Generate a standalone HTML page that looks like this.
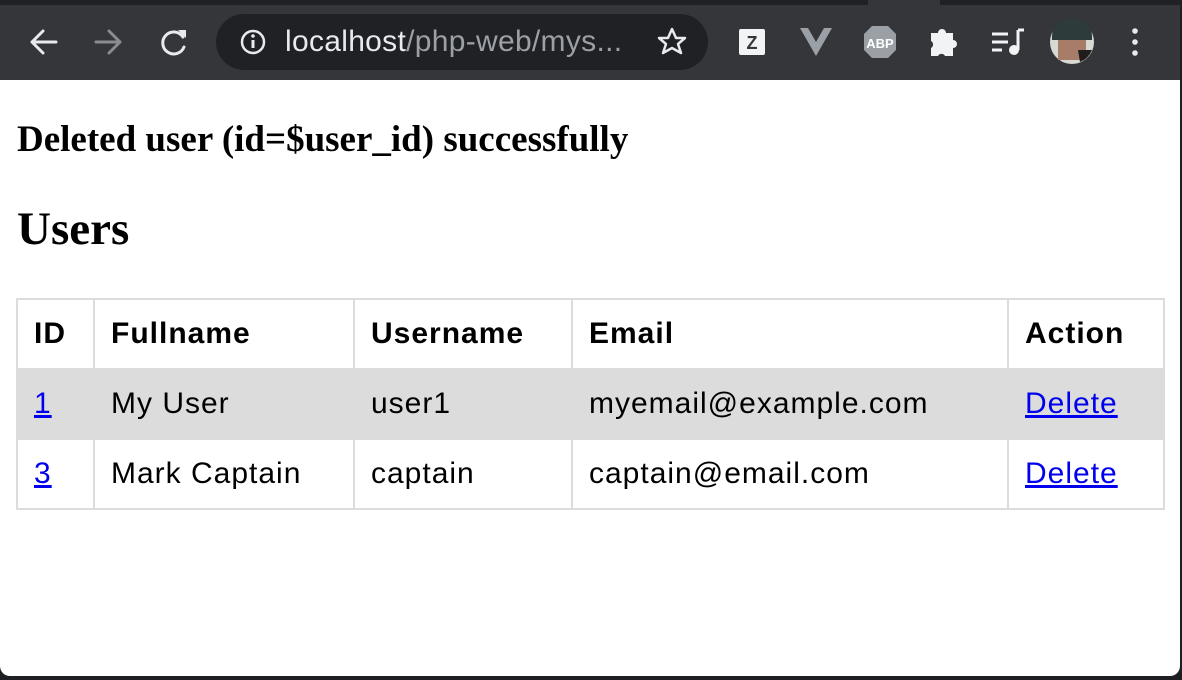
<!DOCTYPE html>
<html><head><style>
*{margin:0;padding:0;box-sizing:border-box}
body{width:1182px;height:680px;background:#1e1f22;position:relative;overflow:hidden;font-family:"Liberation Sans",sans-serif}
.top{position:absolute;left:0;top:0;width:1182px;height:6px;background:#202124}
.gap{position:absolute;left:868px;top:0;width:72px;height:6px;background:#35363a}
.bar{position:absolute;left:0;top:5px;width:1180px;height:75px;background:#35363a}
.urltext{position:absolute;left:285px;top:25px;font-size:30px;color:#e8eaed;letter-spacing:0.3px}
.urltext span{color:#9aa0a6}
.page{position:absolute;left:0;top:80px;width:1180px;height:596px;background:#fff;border-radius:0 0 10px 10px}
h3{position:absolute;left:17px;top:38px;font-family:"Liberation Serif",serif;font-size:37px;font-weight:bold;color:#000;white-space:nowrap}
h2{position:absolute;left:17px;top:122px;font-family:"Liberation Serif",serif;font-size:47px;font-weight:bold;color:#000}
table{position:absolute;left:16px;top:218px;border-collapse:collapse;font-size:30px;letter-spacing:1px}
td,th{border:2px solid #dcdcdc;height:70px;padding:0 16px;text-align:left;vertical-align:middle;white-space:nowrap}
th{font-weight:bold}
tr.g td{background:#dcdcdc}
a{color:#0000ee;text-decoration:underline}
</style></head><body>
<div class="top"></div><div class="gap"></div>
<div class="bar">
<svg style="position:absolute;left:0;top:0" width="1180" height="75" viewBox="0 5 1180 75">
<rect x="216" y="14" width="492" height="56" rx="28" fill="#202124"/>
<g stroke="#e8eaed" stroke-width="3" fill="none" stroke-linecap="round" stroke-linejoin="round">
<path d="M56 42H32M43 31L32 42L43 53"/>
<path d="M96 42H120M109 31L120 42L109 53" stroke="#8a8c90"/>
<path d="M183 37A11 11 0 1 0 184 47"/>
</g>
<path d="M178 30L186 30L186 38Z" fill="#e8eaed"/>
<circle cx="253" cy="42" r="11" fill="none" stroke="#e8eaed" stroke-width="2.5"/>
<rect x="251.5" y="40" width="3" height="8" fill="#e8eaed"/><circle cx="253" cy="36" r="1.8" fill="#e8eaed"/>
<path d="M672 29L676 38L685 38L678 44L681 53L672 48L663 53L666 44L659 38L668 38Z" fill="none" stroke="#e8eaed" stroke-width="2.5" stroke-linejoin="round"/>
<rect x="739" y="29" width="26" height="26" rx="2" fill="#f1f3f4"/>
<text x="752" y="49" font-family="Liberation Sans" font-weight="bold" font-size="18" fill="#35363a" text-anchor="middle">Z</text>
<path d="M800 28L816 56L832 28L824 28L816 42L808 28Z" fill="#9aa0a6"/>
<polygon points="872,26 888,26 896,34 896,50 888,58 872,58 864,50 864,34" fill="#9aa0a6"/>
<text x="880" y="48" font-family="Liberation Sans" font-weight="bold" font-size="13" fill="#fff" text-anchor="middle">ABP</text>
<path d="M931 33h7a4 4 0 0 1 8 0h7v7a4 4 0 0 1 0 8v8h-8a4 4 0 0 0-7 0h-7v-8a4 4 0 0 0 0-7z" fill="#f1f3f4"/>
<g stroke="#f1f3f4" stroke-width="3"><path d="M992 34h16M992 42h16M992 50h10"/><path d="M1018 30v20"/></g>
<circle cx="1014" cy="50" r="5" fill="#f1f3f4"/><path d="M1018 30h6" stroke="#f1f3f4" stroke-width="3"/>
<circle cx="1072" cy="42" r="22" fill="#d9d9d4"/><path d="M1058 40a14 16 0 0 1 28 0v20h-28z" fill="#a77c68"/><path d="M1052 36a20 18 0 0 1 40 0l0 4h-40z" fill="#2d3b3a"/><path d="M1078 50l14 0a22 22 0 0 1-12 12z" fill="#1d1d1d"/>
<g fill="#e8eaed"><circle cx="1135" cy="31" r="2.8"/><circle cx="1135" cy="42" r="2.8"/><circle cx="1135" cy="53" r="2.8"/></g>
</svg>
</div>
<div class="urltext">localhost<span>/php-web/mys...</span></div>
<div class="page">
<h3>Deleted user (id=$user_id) successfully</h3>
<h2>Users</h2>
<table>
<tr><th style="width:77px">ID</th><th style="width:260px">Fullname</th><th style="width:218px">Username</th><th style="width:436px">Email</th><th style="width:156px">Action</th></tr>
<tr class="g"><td><a>1</a></td><td>My User</td><td>user1</td><td>myemail@example.com</td><td><a>Delete</a></td></tr>
<tr><td><a>3</a></td><td>Mark Captain</td><td>captain</td><td>captain@email.com</td><td><a>Delete</a></td></tr>
</table>
</div>
</body></html>
